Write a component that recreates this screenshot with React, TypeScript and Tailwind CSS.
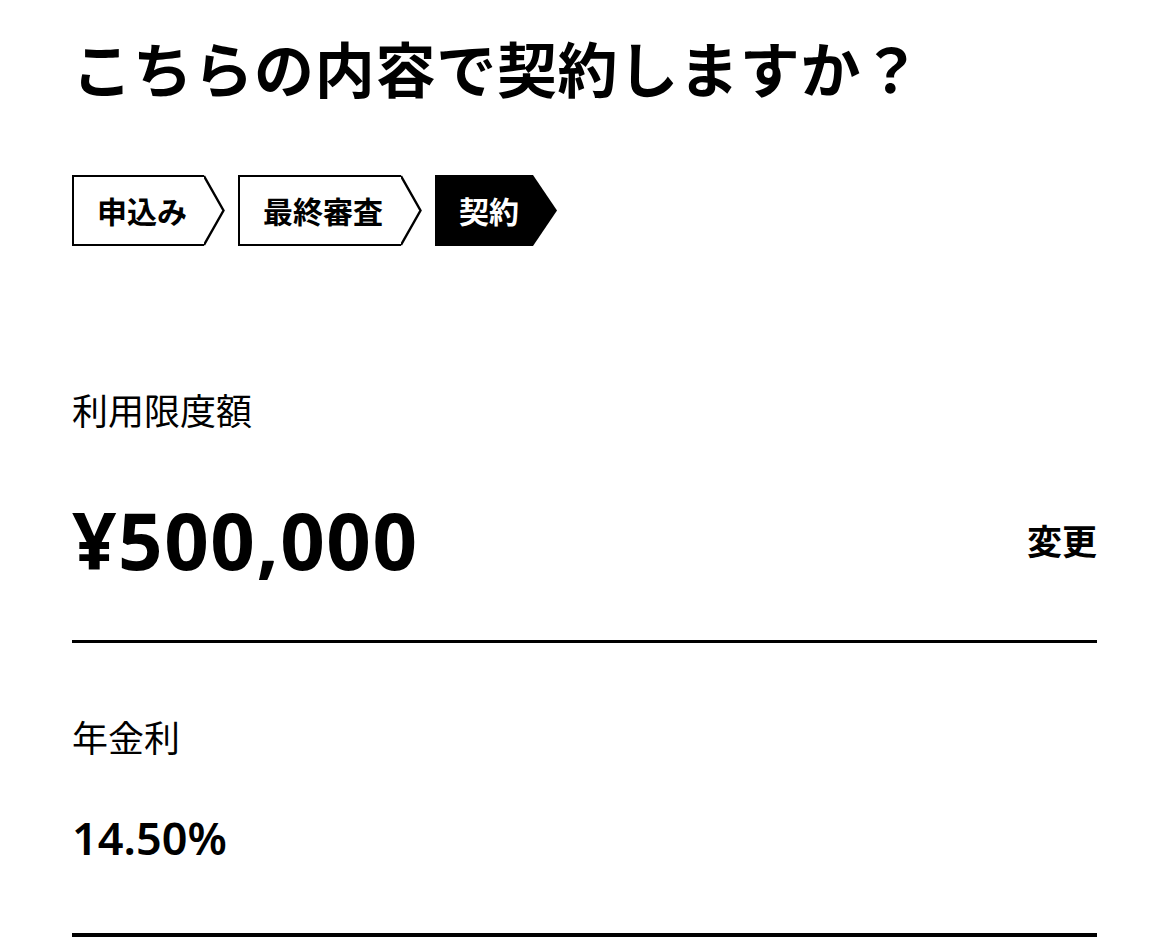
import React from 'react';

const font = '"Noto Sans CJK JP", "Noto Sans", sans-serif';
const numFont = '"Noto Sans", "Noto Sans CJK JP", sans-serif';

type Step = { label: string; width: string; active?: boolean };

const steps: Step[] = [
  { label: '申込み', width: 'w-[132px]' },
  { label: '最終審査', width: 'w-[163px]' },
  { label: '契約', width: 'w-[98px]', active: true },
];

function StepTag({ step }: { step: Step }) {
  if (step.active) {
    return (
      <div className="flex h-[71px]">
        <div className={`flex h-full items-center bg-black pl-[24px] text-[30px] font-bold text-white ${step.width}`}>
          {step.label}
        </div>
        <svg width="24" height="71" viewBox="0 0 24 71" className="block">
          <polygon points="0,0 24,35.5 0,71" fill="#000" />
        </svg>
      </div>
    );
  }
  return (
    <div className="flex h-[71px]">
      <div
        className={`flex h-full items-center border-2 border-r-0 border-black bg-white pl-[23px] text-[30px] font-bold text-black ${step.width}`}
      >
        {step.label}
      </div>
      <svg width="22" height="71" viewBox="0 0 22 71" className="block">
        <polyline points="0,1 19.5,35.5 0,70" fill="none" stroke="#000" strokeWidth="2.4" />
      </svg>
    </div>
  );
}

export default function App() {
  return (
    <div className="min-h-[948px] w-[1169px] bg-white text-black" style={{ fontFamily: font }}>
      <div className="pl-[72px] pr-[72px] pt-[23px]">
        <h1 className="text-[60px] font-bold leading-[88px] tracking-[0.7px]">こちらの内容で契約しますか？</h1>

        <div className="mt-[64px] flex gap-[12px]">
          {steps.map((s) => (
            <StepTag key={s.label} step={s} />
          ))}
        </div>

        <div className="mt-[139px] text-[36px] leading-[48px]">利用限度額</div>
        <div className="mt-[57px] flex items-center justify-between">
          <span className="text-[78px] font-bold leading-[100px] tracking-[1.5px]" style={{ fontFamily: numFont }}>
            ¥500,000
          </span>
          <button className="text-[35px] font-bold leading-[48px]">変更</button>
        </div>
        <div className="mt-[50px] h-[3px] bg-black" />

        <div className="mt-[69px] text-[36px] leading-[48px]">年金利</div>
        <div className="mt-[48px] text-[45px] font-semibold leading-[60px]" style={{ fontFamily: numFont }}>
          14.50%
        </div>
        <div className="mt-[65px] h-[4px] bg-black" />
      </div>
    </div>
  );
}
